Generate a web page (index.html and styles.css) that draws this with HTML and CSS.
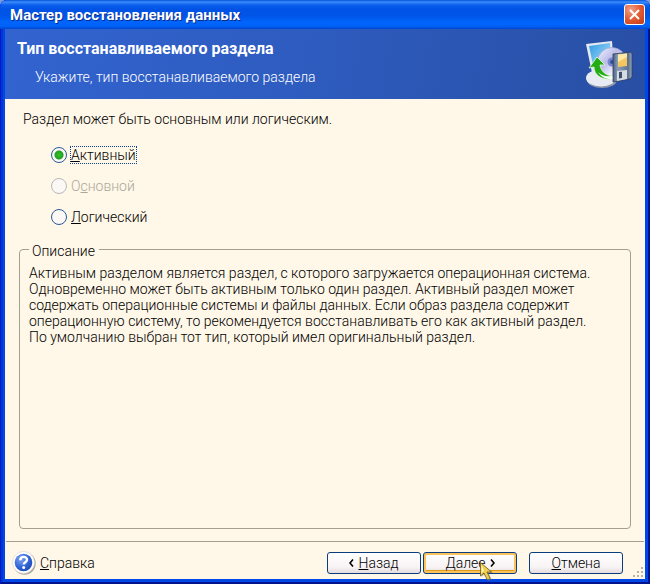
FILE: index.html
```html
<!DOCTYPE html>
<html lang="ru">
<head>
  <meta charset="utf-8">
  <title>Мастер восстановления данных</title>
  <link rel="stylesheet" href="styles.css">
</head>
<body>
  <div class="window">
    <div class="titlebar">
      <h1>Мастер восстановления данных</h1>
      <button type="button" class="close" aria-label="Закрыть">
        <svg width="11" height="11" viewBox="0 0 11 11"><path d="M1 1L10 10M10 1L1 10" stroke="#fff" stroke-width="2"/></svg>
      </button>
    </div>

    <div class="client">
      <header class="banner">
        <div>
          <h2>Тип восстанавливаемого раздела</h2>
          <p>Укажите, тип восстанавливаемого раздела</p>
        </div>
        <svg class="banner-icon" width="48" height="50" viewBox="0 0 48 50">
          <defs>
            <linearGradient id="screen" x1="0" y1="0" x2="1" y2="1">
              <stop offset="0" stop-color="#2f9be6"/>
              <stop offset="1" stop-color="#c5ecfb"/>
            </linearGradient>
            <linearGradient id="disc" x1="0" y1="0" x2="1" y2="1">
              <stop offset="0" stop-color="#f6f6ff"/>
              <stop offset="0.4" stop-color="#b9bce8"/>
              <stop offset="0.7" stop-color="#f3efff"/>
              <stop offset="1" stop-color="#a9a9dc"/>
            </linearGradient>
            <linearGradient id="steel" x1="0" y1="0" x2="1" y2="0">
              <stop offset="0" stop-color="#4d6280"/>
              <stop offset="0.25" stop-color="#8b9fba"/>
              <stop offset="0.8" stop-color="#5c6f8e"/>
              <stop offset="1" stop-color="#9aacc4"/>
            </linearGradient>
          </defs>
          <ellipse cx="17" cy="40" rx="15" ry="8" fill="#8f96aa"/>
          <ellipse cx="16" cy="38" rx="15" ry="8.500" fill="#e9ebf4"/>
          <path d="M1 4L27 1L29 28L7 33Z" fill="#e4e9f2"/>
          <path d="M4 6L25 3L27 27L9 30Z" fill="url(#screen)"/>
          <circle cx="27" cy="22" r="14.500" fill="url(#disc)" stroke="#9a9ccc" stroke-width="0.6"/>
          <circle cx="27" cy="22" r="4.500" fill="#7c86cc"/>
          <circle cx="27" cy="22" r="2" fill="#2c55a8"/>
          <path d="M28 14L46 12L47 14V37L45 39L28 42Z" fill="url(#steel)" stroke="#2f3d58" stroke-width="0.800"/>
          <path d="M33 14.500L42 13.500V26L33 27Z" fill="#f4c660"/>
          <path d="M33 14.500L42 13.500V17L33 22Z" fill="#ffe9a6"/>
          <path d="M32 31L42 30V39L32 41Z" fill="#d5dbe5"/>
          <path d="M34 32L37 31.700V38L34 38.500Z" fill="#3f4f6b"/>
          <path d="M12 17L20 25H15C16 31 20 35 27 36V39C16 40 9 35 9 27L4 28Z" fill="#25ac14" stroke="#e8fbe4" stroke-width="0.800"/>
          <path d="M13 32C17 36 21 36.500 27 36V39C21 39.500 16 37 13 32Z" fill="#f3fff0"/>
        </svg>
      </header>

      <main class="content">
        <p class="intro" id="intro">Раздел может быть основным или логическим.</p>
        <div class="choices" role="radiogroup" aria-labelledby="intro">
          <label><input type="radio" name="type" checked><span class="focused"><u>А</u>ктивный</span></label>
          <label class="disabled"><input type="radio" name="type" disabled><span>О<u>с</u>новной</span></label>
          <label><input type="radio" name="type"><span><u>Л</u>огический</span></label>
        </div>
        <fieldset class="description">
          <legend>Описание</legend>
          <p>
            Активным разделом является раздел, с которого загружается операционная система.<br>
            Одновременно может быть активным только один раздел. Активный раздел может<br>
            содержать операционные системы и файлы данных. Если образ раздела содержит<br>
            операционную систему, то рекомендуется восстанавливать его как активный раздел.<br>
            По умолчанию выбран тот тип, который имел оригинальный раздел.
          </p>
        </fieldset>
      </main>

      <footer class="footer">
        <a href="#help" class="help">
          <svg width="24" height="24" viewBox="0 0 24 24">
            <defs>
              <radialGradient id="ball" cx="0.35" cy="0.3" r="0.8">
                <stop offset="0" stop-color="#7fa5f2"/>
                <stop offset="0.6" stop-color="#2f63d6"/>
                <stop offset="1" stop-color="#1c47b0"/>
              </radialGradient>
            </defs>
            <circle cx="12.500" cy="12.500" r="11.200" fill="#aaa6a0"/>
            <circle cx="11.500" cy="11.500" r="11" fill="#fff" stroke="#d4d0cc" stroke-width="0.6"/>
            <circle cx="11.500" cy="11.500" r="8.800" fill="url(#ball)"/>
            <path d="M8.300 9.200C8.300 4.800 15 5 15 8.800C15 11.200 11.700 11.200 11.700 13.600" fill="none" stroke="#fff" stroke-width="2.400"/>
            <circle cx="11.700" cy="16.600" r="1.500" fill="#fff"/>
          </svg>
          <span><u>С</u>правка</span>
        </a>
        <div class="buttons">
          <button type="button"><svg width="5" height="8" viewBox="0 0 5 8"><path d="M4 0.500L1 4L4 7.500" fill="none" stroke="#000" stroke-width="1.600"/></svg><span><u>Н</u>азад</span></button>
          <button type="button" class="hot"><span><u>Д</u>алее</span><svg width="5" height="8" viewBox="0 0 5 8"><path d="M1 0.500L4 4L1 7.500" fill="none" stroke="#000" stroke-width="1.600"/></svg>
            <svg class="cursor" width="14" height="20" viewBox="0 0 14 20">
              <path d="M1.500 1.500V15L5 12L8.500 19L11.500 17.500L8.500 11H13Z" fill="#777" opacity="0.5"/>
              <path d="M0.500 0.500V14L3.800 11L7.500 18L10.200 16.500L7 10H11.500Z" fill="#f0cf52" stroke="#6b5a1c" stroke-width="0.800"/>
              <path d="M1.500 3V11L4 8.500Z" fill="#fff6b8"/>
            </svg>
          </button>
          <button type="button" class="cancel"><span><u>О</u>тмена</span></button>
        </div>
        <svg class="grip" width="11" height="11" viewBox="0 0 11 11">
          <path d="M8 0h2v2h-2zM4 4h2v2h-2zM8 4h2v2h-2zM0 8h2v2h-2zM4 8h2v2h-2zM8 8h2v2h-2z" fill="#b8b4a5"/>
        </svg>
      </footer>
    </div>
  </div>
</body>
</html>
```

FILE: styles.css
```css
* {
  box-sizing: border-box;
}

body {
  margin: 0;
  background-color: #7b9be0;
  font-family: Roboto, "Liberation Sans", sans-serif;
  font-size: 14px;
  font-weight: 300;
  line-height: 16px;
  color: #000;
}

h1, h2, p {
  margin: 0;
}

.window {
  display: flex;
  flex-direction: column;
  min-height: 100vh;
  padding: 0 5px 5px;
  border-radius: 7px 7px 0 0;
  background-color: #0048e6;
  box-shadow: inset 1px 0 #0019c4, inset -2px -2px #00138c, inset 3px 0 #0035d8;
  overflow: hidden;
}

.titlebar {
  display: flex;
  align-items: center;
  justify-content: space-between;
  height: 29px;
  margin: 0 -5px;
  padding: 0 5px 0 10px;
  background: linear-gradient(#0353d8 0, #3c8cfa 2px, #0a5fee 5px, #0053e4 9px, #0055e8 16px, #0065fc 22px, #0062f8 26px, #0047d0 29px);
}

.titlebar h1 {
  font-size: 15px;
  font-weight: bold;
  color: #fff;
  text-shadow: 1px 1px #0a2a8c;
}

.close {
  display: flex;
  align-items: center;
  justify-content: center;
  width: 21px;
  height: 21px;
  padding: 0;
  border: 1px solid #fff;
  border-radius: 3px;
  background: radial-gradient(circle at 30% 25%, #f0a08a, #e25a33 50%, #c23a14);
}

.client {
  display: flex;
  flex: 1;
  flex-direction: column;
  background-color: #fff7e8;
}

.banner {
  display: flex;
  justify-content: space-between;
  height: 70px;
  padding: 11px 12px;
  background: linear-gradient(100deg, #3263cf, #2e5cc0 45%, #284fa4);
  color: #fff;
}

.banner h2 {
  font-size: 16px;
  font-weight: bold;
  line-height: 18px;
}

.banner p {
  padding: 10px 0 0 18px;
  line-height: 18px;
}

.banner-icon {
  flex: none;
}

.content {
  display: flex;
  flex: 1;
  flex-direction: column;
  padding: 12px 14px;
}

.intro {
  padding-left: 4px;
}

.choices {
  display: flex;
  flex-direction: column;
  gap: 13px;
  padding: 19px 32px 13px;
}

.choices label {
  display: flex;
  align-items: center;
  gap: 3px;
  height: 18px;
}

.choices input {
  appearance: none;
  width: 16px;
  height: 16px;
  margin: 0;
  border: 1px solid #2a5a98;
  border-radius: 50%;
  background-color: #fbf8f6;
}

.choices input:checked {
  background-image: radial-gradient(circle, #35c22e 0, #21a121 4px, transparent 5px);
}

.choices span {
  border: 1px solid transparent;
}

.choices .focused {
  border: 1px dotted #123f8c;
}

.choices .disabled {
  color: #aca899;
}

.choices .disabled input {
  border-color: #b9b8b8;
}

.description {
  flex: 1;
  min-width: 0;
  margin: 0;
  padding: 6px 9px;
  border: 1px solid #a39f8f;
  border-radius: 4px;
}

.description legend {
  padding: 4px 4px 0 3px;
}

.footer {
  display: flex;
  align-items: center;
  justify-content: space-between;
  position: relative;
  height: 38px;
  margin: 0 1px;
  padding: 4px 21px 0 6px;
  border-top: 1px solid #a39f8f;
}

.help {
  display: flex;
  align-items: center;
  gap: 4px;
  color: #000;
  text-decoration: none;
}

.buttons {
  display: flex;
  gap: 2px;
}

.buttons button {
  display: flex;
  align-items: center;
  justify-content: center;
  gap: 4px;
  position: relative;
  width: 94px;
  height: 22px;
  padding: 0;
  border: 1px solid #0b3c80;
  border-radius: 3px;
  background: linear-gradient(#fff, #f8f3f5 70%, #e4dce0);
  font: inherit;
  color: #000;
}

.buttons .hot {
  box-shadow: inset 0 0 0 2px #fbc35b, inset 0 -3px #e79a18;
}

.buttons .cancel {
  margin-left: 10px;
}

.cursor {
  position: absolute;
  left: 56px;
  top: 9px;
}

.grip {
  position: absolute;
  right: 0;
  bottom: 1px;
}
```
